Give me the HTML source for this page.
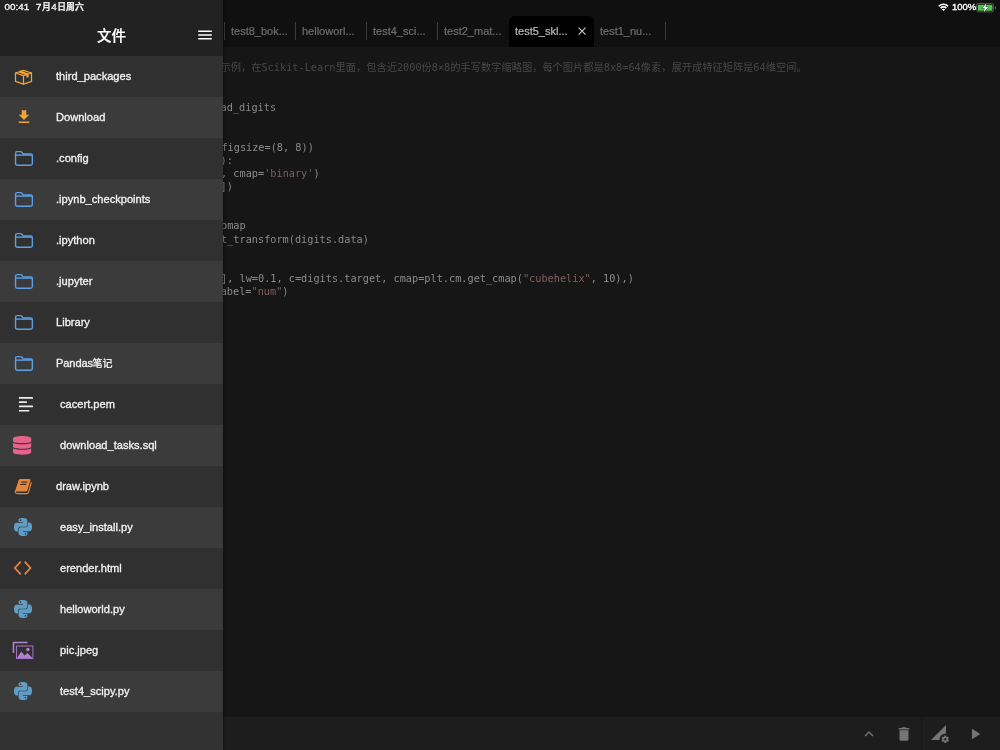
<!DOCTYPE html>
<html lang="zh">
<head>
<meta charset="utf-8">
<title>文件</title>
<style>
*{box-sizing:border-box;margin:0;padding:0}
html,body{width:1000px;height:750px;overflow:hidden;background:#161616}
body{position:relative;will-change:transform;font-family:"Liberation Sans","Noto Sans CJK SC",sans-serif;color:#e6e6e6}
#main{position:absolute;left:0;top:0;width:1000px;height:750px;background:#161616}
#tabbar{position:absolute;left:0;top:0;width:1000px;height:47px;background:#101010}
.tab{position:absolute;top:16px;height:31px;line-height:30px;font-size:11px;color:#6e6e6e;white-space:nowrap;-webkit-text-stroke:.2px #6e6e6e}
.tab.active{background:#000;border-radius:6px 6px 0 0;color:#bcbcbc;-webkit-text-stroke:.2px #bcbcbc}
.sep{position:absolute;top:22px;width:1px;height:18px;background:#3c3c3c}
#code{position:absolute;left:0;top:0;font-family:"DejaVu Sans Mono","Liberation Mono","Noto Sans CJK SC",monospace;font-size:10.24px;color:#8b8b8b}
.ln{position:absolute;white-space:pre;height:13px;line-height:13px}
.str{color:#7d5f5c}
.cm{color:#474747}
#bottombar{position:absolute;left:0;top:717px;width:1000px;height:33px;background:#1d1d1d}
#date i{font-style:normal;padding:0 .3px;font-size:9.8px}
.cj{letter-spacing:0}
.cj i{font-style:normal;letter-spacing:0}
#bsep{position:absolute;left:921px;top:0;width:1px;height:33px;background:#171717}
.bi{position:absolute;top:8px;width:18px;height:18px;fill:#757575}
#status-right{position:absolute;left:0;top:0;width:1000px;height:16px}
#pct{position:absolute;left:952px;top:.2px;font-size:9.5px;line-height:13px;font-weight:normal;-webkit-text-stroke:.35px #fff;color:#fff;white-space:nowrap}
#sidebar{position:absolute;left:0;top:0;width:223px;height:750px;background:#323232;box-shadow:1px 0 3px rgba(0,0,0,.35)}
#sb-head{position:absolute;left:0;top:0;width:223px;height:56px;background:#222}
#time{position:absolute;left:4.6px;top:.4px;font-size:9.9px;line-height:13px;color:#f2f2f2;font-weight:500;-webkit-text-stroke:.35px #f2f2f2;white-space:nowrap}
#date{position:absolute;left:35.8px;top:.4px;font-size:8.8px;letter-spacing:.15px;line-height:13px;color:#f2f2f2;font-weight:500;-webkit-text-stroke:.35px #f2f2f2;white-space:nowrap}
#title{position:absolute;left:0;top:24.6px;width:223px;text-align:center;font-size:14.5px;line-height:22px;font-weight:500;color:#fff;-webkit-text-stroke:.2px #fff}
.row{position:absolute;left:0;width:223px;height:41px;background:#303030}
.row.alt{background:#3b3b3b}
.row span{position:absolute;left:56px;top:.4px;line-height:41px;font-size:11.1px;color:#f2f2f2;white-space:nowrap;-webkit-text-stroke:.32px #f2f2f2;font-weight:500}
.row.f span{left:60px}
.row span b{font-size:10px;font-weight:500;margin-left:-.3px;-webkit-text-stroke:.15px #f2f2f2}
.row span u{text-decoration:none;letter-spacing:-.12px}
.row svg{position:absolute}
</style>
</head>
<body>
<div id="main">
  <div id="tabbar">
    <div class="sep" style="left:224px"></div>
    <div class="tab" style="left:231px">test8_bok...</div>
    <div class="sep" style="left:295px"></div>
    <div class="tab" style="left:302px">helloworl...</div>
    <div class="sep" style="left:366px"></div>
    <div class="tab" style="left:373px">test4_sci...</div>
    <div class="sep" style="left:437px"></div>
    <div class="tab" style="left:444px">test2_mat...</div>
    <div class="tab active" style="left:509px;width:85px;padding-left:6px">test5_skl...<svg style="position:absolute;left:69.2px;top:11px" width="8.200" height="8.200" viewBox="0 0 9 9" fill="none" stroke="#cdcdcd" stroke-width="1.250"><path d="M.7.7L8.300 8.300M8.300.7L.7 8.300"/></svg></div>
    <div class="tab" style="left:600px">test1_nu...</div>
    <div class="sep" style="left:665px"></div>
  </div>
  <div id="code">
    <div class="ln" style="left:220.6px;top:61.40px"><span class="cm cj">示例，在<i>Scikit-Learn</i>里面，包含近<i>2000</i>份<i>8×8</i>的手写数字缩略图，每个图片都是<i>8x8=64</i>像素，展开成特征矩阵是<i>64</i>维空间。</span></div>
    <div class="ln" style="left:220.6px;top:101.40px">ad_digits</div>
    <div class="ln" style="left:221.4px;top:140.76px">figsize=(8, 8))</div>
    <div class="ln" style="left:220.6px;top:153.88px">):</div>
    <div class="ln" style="left:221.0px;top:167.00px">, cmap=<span class="str">'binary'</span>)</div>
    <div class="ln" style="left:220.6px;top:180.12px">])</div>
    <div class="ln" style="left:221.0px;top:219.48px">omap</div>
    <div class="ln" style="left:221.0px;top:232.60px">t_transform(digits.data)</div>
    <div class="ln" style="left:221.0px;top:271.96px">], lw=0.1, c=digits.target, cmap=plt.cm.get_cmap(<span class="str">"cubehelix"</span>, 10),)</div>
    <div class="ln" style="left:220.7px;top:285.08px">abel=<span class="str">"num"</span>)</div>
  </div>
  <div id="bottombar">
    <div id="bsep"></div>
    <svg class="bi" style="left:860px" viewBox="0 0 24 24"><path d="M12 8l-6 6 1.41 1.41L12 10.83l4.59 4.58L18 14z"/></svg>
    <svg class="bi" style="left:895px" viewBox="0 0 24 24"><path d="M6 19c0 1.1.9 2 2 2h8c1.1 0 2-.9 2-2V7H6v12zM19 4h-3.5l-1-1h-5l-1 1H5v2h14V4z"/></svg>
    <svg class="bi" style="left:931px" viewBox="0 0 24 24"><path d="M18.99 11.5c.34 0 .67.03 1 .07L20 0 0 20h11.56c-.04-.33-.07-.66-.07-1 0-4.14 3.36-7.5 7.5-7.5zm3.71 7.99c.02-.16.04-.32.04-.49 0-.17-.01-.33-.04-.49l1.06-.83c.09-.08.12-.21.06-.32l-1-1.73c-.06-.11-.19-.15-.31-.11l-1.24.5c-.26-.2-.54-.37-.85-.49l-.19-1.32c-.01-.12-.12-.21-.24-.21h-2c-.12 0-.23.09-.25.21l-.19 1.32c-.3.13-.59.29-.85.49l-1.24-.5c-.11-.04-.24 0-.31.11l-1 1.73c-.06.11-.04.24.06.32l1.06.83c-.02.16-.03.32-.03.49 0 .17.01.33.03.49l-1.06.83c-.09.08-.12.21-.06.32l1 1.73c.06.11.19.15.31.11l1.24-.5c.26.2.54.37.85.49l.19 1.32c.02.12.12.21.25.21h2c.12 0 .23-.09.25-.21l.19-1.32c.3-.13.59-.29.84-.49l1.25.5c.11.04.24 0 .31-.11l1-1.73c.06-.11.03-.24-.06-.32l-1.07-.83zm-3.71 1.01c-.83 0-1.5-.67-1.5-1.5s.67-1.5 1.5-1.5 1.5.67 1.5 1.5-.67 1.5-1.5 1.5z"/></svg>
    <svg class="bi" style="left:966px" viewBox="0 0 24 24"><path d="M8 5v14l11-7z"/></svg>
  </div>
</div>
<div id="sidebar">
  <div id="sb-head">
    <div id="time">00:41</div>
    <div id="date"><i>7</i>月<i>4</i>日周六</div>
    <div id="title">文件</div>
    <svg id="ham" style="position:absolute;left:196px;top:26.3px" width="18" height="18" viewBox="0 0 24 24" fill="#fff"><path d="M3 18h18v-2H3v2zm0-5h18v-2H3v2zm0-7v2h18V6H3z"/></svg>
  </div>
  <div class="row" style="top:56px"><svg style="left:13px;top:12px" width="21" height="18" viewBox="0 0 21 18" fill="none" stroke="#f2a336" stroke-width="1.25" stroke-linejoin="round" stroke-linecap="round"><path d="M10.500 2.300L18.500 5V13.400L10.500 16.100L2.500 13.400V5Z"/><path d="M2.500 5L10.500 7.700L18.500 5M10.500 7.700V16.100"/><path d="M6.500 3.650L14.500 6.350V9.600" stroke-width="2.300" stroke-linecap="butt"/></svg><span>third_packages</span></div>
  <div class="row alt" style="top:97px"><svg style="left:14.5px;top:11.2px" width="18" height="18" viewBox="0 0 24 24" fill="#f2a336"><path d="M19 9h-4V3H9v6H5l7 7 7-7zM5 18v2h14v-2H5z"/></svg><span>Download</span></div>
  <div class="row" style="top:138px"><svg style="left:14px;top:12px" width="20" height="17" viewBox="0 0 20 17" fill="none" stroke="#5c9fe3" stroke-width="1.400" stroke-linejoin="round"><path d="M1.550 13.500V3.300Q1.550 1.600 3.300 1.600H6.500Q7.500 1.600 8.050 2.450L8.500 3.150Q9.050 4 10.100 4H16.600Q18.350 4 18.350 5.700V13.500Q18.350 15.250 16.600 15.250H3.300Q1.550 15.250 1.550 13.500Z"/><path d="M1.550 5.100H18.350"/></svg><span>.config</span></div>
  <div class="row alt" style="top:179px"><svg style="left:14px;top:12px" width="20" height="17" viewBox="0 0 20 17" fill="none" stroke="#5c9fe3" stroke-width="1.400" stroke-linejoin="round"><path d="M1.550 13.500V3.300Q1.550 1.600 3.300 1.600H6.500Q7.500 1.600 8.050 2.450L8.500 3.150Q9.050 4 10.100 4H16.600Q18.350 4 18.350 5.700V13.500Q18.350 15.250 16.600 15.250H3.300Q1.550 15.250 1.550 13.500Z"/><path d="M1.550 5.100H18.350"/></svg><span>.ipynb_checkpoints</span></div>
  <div class="row" style="top:220px"><svg style="left:14px;top:12px" width="20" height="17" viewBox="0 0 20 17" fill="none" stroke="#5c9fe3" stroke-width="1.400" stroke-linejoin="round"><path d="M1.550 13.500V3.300Q1.550 1.600 3.300 1.600H6.500Q7.500 1.600 8.050 2.450L8.500 3.150Q9.050 4 10.100 4H16.600Q18.350 4 18.350 5.700V13.500Q18.350 15.250 16.600 15.250H3.300Q1.550 15.250 1.550 13.500Z"/><path d="M1.550 5.100H18.350"/></svg><span>.ipython</span></div>
  <div class="row alt" style="top:261px"><svg style="left:14px;top:12px" width="20" height="17" viewBox="0 0 20 17" fill="none" stroke="#5c9fe3" stroke-width="1.400" stroke-linejoin="round"><path d="M1.550 13.500V3.300Q1.550 1.600 3.300 1.600H6.500Q7.500 1.600 8.050 2.450L8.500 3.150Q9.050 4 10.100 4H16.600Q18.350 4 18.350 5.700V13.500Q18.350 15.250 16.600 15.250H3.300Q1.550 15.250 1.550 13.500Z"/><path d="M1.550 5.100H18.350"/></svg><span>.jupyter</span></div>
  <div class="row" style="top:302px"><svg style="left:14px;top:12px" width="20" height="17" viewBox="0 0 20 17" fill="none" stroke="#5c9fe3" stroke-width="1.400" stroke-linejoin="round"><path d="M1.550 13.500V3.300Q1.550 1.600 3.300 1.600H6.500Q7.500 1.600 8.050 2.450L8.500 3.150Q9.050 4 10.100 4H16.600Q18.350 4 18.350 5.700V13.500Q18.350 15.250 16.600 15.250H3.300Q1.550 15.250 1.550 13.500Z"/><path d="M1.550 5.100H18.350"/></svg><span>Library</span></div>
  <div class="row alt" style="top:343px"><svg style="left:14px;top:12px" width="20" height="17" viewBox="0 0 20 17" fill="none" stroke="#5c9fe3" stroke-width="1.400" stroke-linejoin="round"><path d="M1.550 13.500V3.300Q1.550 1.600 3.300 1.600H6.500Q7.500 1.600 8.050 2.450L8.500 3.150Q9.050 4 10.100 4H16.600Q18.350 4 18.350 5.700V13.500Q18.350 15.250 16.600 15.250H3.300Q1.550 15.250 1.550 13.500Z"/><path d="M1.550 5.100H18.350"/></svg><span><u>Pandas</u><b>笔记</b></span></div>
  <div class="row f" style="top:384px"><svg style="left:18px;top:12px" width="16" height="18" viewBox="0 0 16 18" fill="#ebebeb"><rect x="0.9" y="1.1" width="14.1" height="1.6" rx=".3"/><rect x="0.9" y="5.35" width="8" height="1.6" rx=".3"/><rect x="0.9" y="9.6" width="14.1" height="1.6" rx=".3"/><rect x="0.9" y="13.9" width="10.4" height="1.6" rx=".3"/></svg><span>cacert.pem</span></div>
  <div class="row alt f" style="top:425px"><svg style="left:13.1px;top:10.7px" width="19" height="20" viewBox="0 0 19 20" fill="#e8628d"><path d="M0 2.400C0 1 4 0 9.100 0S18.200 1 18.200 2.400V5.200C18.200 6.400 14 7.100 9.100 7.100S0 6.400 0 5.200Z"/><path d="M0 6.900C1.500 7.800 5 8.300 9.100 8.300S16.700 7.800 18.200 6.900V10.700C18.200 11.900 14 12.700 9.100 12.700S0 11.900 0 10.700Z"/><path d="M0 12.400C1.500 13.300 5 13.800 9.100 13.800S16.700 13.300 18.200 12.400V16.300C18.200 17.700 14 18.700 9.100 18.700S0 17.700 0 16.300Z"/></svg><span>download_tasks.sql</span></div>
  <div class="row" style="top:466px"><svg style="left:13px;top:11px" width="21" height="19" viewBox="0 0 21 19"><path d="M7.600 2H16.400Q17.700 2 17.350 3.200L14.300 13.400Q13.950 14.400 12.800 14.400H3.400Q2 14.400 2.400 13.100L5.700 3.200Q6.100 2 7.600 2Z" fill="#e8853d"/><path d="M8.100 5.100H14.200M7.200 7.400H13.300" stroke="#2c2118" stroke-width="1" fill="none"/><path d="M2.400 13.900Q1.900 16.700 4.600 16.700H13.600Q15.100 16.700 15.600 15.100L18.200 5.600" stroke="#e8853d" stroke-width="1.2" fill="none" stroke-linecap="round"/></svg><span>draw.ipynb</span></div>
  <div class="row alt f" style="top:507px"><svg style="left:13.7px;top:11.3px" width="18" height="18" viewBox="0 0 24 24" fill="#5e9ec6"><path d="M14.250.180l.900.200.730.260.590.300.450.320.340.340.250.340.160.330.100.300.040.260.020.200-.010.130V8.500l-.050.630-.130.550-.210.460-.260.380-.300.310-.330.250-.350.190-.350.140-.330.100-.300.070-.260.040-.210.020H8.770l-.690.050-.590.140-.500.220-.410.270-.330.320-.270.350-.200.360-.150.370-.100.350-.070.320-.040.270-.020.210v3.060H3.170l-.210-.030-.280-.070-.320-.120-.350-.180-.360-.260-.360-.360-.350-.460-.320-.590-.280-.730-.210-.880-.140-1.050-.050-1.230.060-1.220.160-1.040.240-.870.320-.710.360-.570.400-.440.420-.330.420-.240.400-.160.360-.100.320-.050.240-.010h.160l.060.010h8.160v-.830H6.180l-.010-2.750-.020-.370.050-.340.110-.310.170-.280.250-.260.310-.230.380-.200.440-.180.510-.150.580-.120.640-.100.710-.060.770-.040.840-.020 1.270.050zm-6.300 1.980l-.230.330-.080.410.080.410.230.340.330.220.410.090.410-.090.330-.220.230-.340.080-.410-.080-.410-.230-.330-.330-.220-.410-.090-.410.090zm13.090 3.950l.280.060.320.120.350.180.360.270.360.350.350.470.320.590.280.730.210.880.140 1.040.050 1.230-.060 1.230-.160 1.040-.240.860-.320.710-.360.570-.400.450-.420.330-.420.240-.400.160-.360.090-.320.050-.240.020-.160-.010h-8.220v.820h5.840l.010 2.760.020.360-.050.340-.110.310-.170.290-.250.250-.310.240-.380.200-.440.170-.510.150-.580.130-.640.090-.710.070-.770.040-.840.010-1.270-.040-1.070-.140-.900-.200-.730-.250-.590-.300-.450-.330-.340-.340-.250-.340-.160-.330-.100-.300-.040-.250-.020-.200.010-.130v-5.340l.050-.640.130-.540.210-.460.260-.380.300-.320.330-.240.350-.200.350-.140.330-.100.300-.060.260-.040.210-.020.130-.010h5.840l.690-.050.590-.140.500-.210.410-.280.330-.320.270-.350.200-.360.150-.360.100-.350.070-.320.040-.280.020-.210V6.070h2.090l.140.010zm-6.470 14.250l-.230.330-.080.410.080.410.230.330.330.230.410.080.410-.080.330-.230.230-.330.080-.410-.080-.410-.230-.330-.330-.230-.410-.080-.410.080z"/></svg><span>easy_install.py</span></div>
  <div class="row f" style="top:548px"><svg style="left:13px;top:12px" width="20" height="17" viewBox="0 0 20 17" fill="none" stroke="#e8853d" stroke-width="1.750"><path d="M7.700 1.700L1.950 8L7.700 14.300M11.700 1.700L17.450 8L11.700 14.300"/></svg><span>erender.html</span></div>
  <div class="row alt f" style="top:589px"><svg style="left:13.7px;top:11.3px" width="18" height="18" viewBox="0 0 24 24" fill="#5e9ec6"><path d="M14.250.180l.900.200.730.260.590.300.450.320.340.340.250.340.160.330.100.300.040.260.020.200-.010.130V8.500l-.050.630-.130.550-.210.460-.260.380-.300.310-.330.250-.350.190-.350.140-.330.100-.300.070-.260.040-.210.020H8.770l-.690.050-.590.140-.500.220-.410.270-.330.320-.270.350-.200.360-.150.370-.100.350-.070.320-.040.270-.020.210v3.060H3.170l-.210-.030-.280-.070-.320-.120-.350-.180-.360-.260-.360-.360-.350-.460-.320-.590-.280-.730-.210-.880-.140-1.050-.050-1.230.060-1.220.160-1.040.240-.870.320-.710.360-.570.400-.440.420-.330.420-.240.400-.160.360-.100.320-.050.240-.010h.160l.060.010h8.160v-.830H6.180l-.010-2.750-.020-.370.050-.340.110-.310.170-.280.250-.260.310-.230.380-.200.440-.180.510-.150.580-.120.640-.100.710-.060.770-.040.840-.020 1.270.050zm-6.300 1.980l-.230.330-.080.410.080.410.230.340.330.220.410.090.410-.090.330-.220.230-.340.080-.410-.080-.410-.230-.330-.330-.220-.410-.090-.410.090zm13.090 3.950l.280.060.320.120.350.180.360.270.360.350.350.470.320.590.280.730.210.880.140 1.040.050 1.230-.060 1.230-.160 1.040-.240.860-.320.710-.360.570-.400.450-.420.330-.420.240-.400.160-.360.090-.320.050-.240.020-.160-.010h-8.220v.820h5.840l.010 2.760.020.360-.050.340-.110.310-.170.290-.250.250-.310.240-.380.200-.440.170-.510.150-.580.130-.640.090-.710.070-.770.040-.840.010-1.270-.040-1.070-.140-.900-.200-.730-.250-.590-.300-.450-.330-.340-.340-.250-.340-.160-.330-.100-.300-.040-.250-.020-.200.010-.130v-5.340l.050-.640.130-.540.210-.460.260-.380.300-.320.330-.240.350-.200.350-.140.330-.100.300-.060.260-.040.210-.020.130-.010h5.840l.690-.050.590-.140.500-.210.410-.280.330-.320.270-.350.200-.360.150-.360.100-.350.070-.320.040-.280.020-.210V6.070h2.090l.140.010zm-6.470 14.250l-.230.330-.080.410.080.410.230.330.330.230.410.080.410-.080.330-.230.230-.330.080-.410-.080-.410-.230-.330-.330-.230-.410-.080-.410.080z"/></svg><span>helloworld.py</span></div>
  <div class="row f" style="top:630px"><svg style="left:12px;top:11px" width="22" height="19" viewBox="0 0 22 19"><path d="M1.500 12V1.500H15.500" fill="none" stroke="#b07fd2" stroke-width="1.6"/><rect x="4.600" y="5" width="16.300" height="12.500" fill="none" stroke="#b07fd2" stroke-width=".9"/><path d="M5 17.100L9.300 10.400L12.600 14.600L15.400 12.100L20.500 17.100Z" fill="#b07fd2"/><circle cx="15.900" cy="8.500" r="1.700" fill="#b07fd2"/></svg><span>pic.jpeg</span></div>
  <div class="row alt f" style="top:671px"><svg style="left:13.7px;top:11.3px" width="18" height="18" viewBox="0 0 24 24" fill="#5e9ec6"><path d="M14.250.180l.900.200.730.260.590.300.450.320.340.340.250.340.160.330.100.300.040.260.020.200-.010.130V8.500l-.050.630-.130.550-.210.460-.260.380-.300.310-.330.250-.350.190-.350.140-.330.100-.300.070-.260.040-.210.020H8.770l-.690.050-.590.140-.500.220-.410.270-.330.320-.270.350-.200.360-.150.370-.100.350-.070.320-.040.270-.020.210v3.060H3.170l-.210-.030-.280-.070-.320-.120-.350-.180-.360-.260-.360-.360-.350-.460-.320-.590-.280-.730-.210-.880-.140-1.050-.050-1.230.060-1.220.160-1.040.240-.870.320-.710.360-.570.400-.440.420-.330.420-.240.400-.160.360-.100.320-.050.240-.010h.160l.060.010h8.160v-.830H6.180l-.010-2.750-.020-.370.050-.340.110-.310.170-.280.250-.260.310-.230.380-.200.440-.180.510-.150.580-.120.640-.100.710-.060.770-.040.840-.020 1.270.050zm-6.300 1.980l-.230.330-.080.410.080.410.230.340.330.220.410.090.410-.090.330-.220.230-.340.080-.410-.080-.410-.230-.330-.330-.220-.410-.090-.410.090zm13.090 3.950l.280.060.320.120.350.180.360.270.360.350.350.470.320.590.280.730.210.880.140 1.040.050 1.230-.060 1.230-.160 1.040-.240.860-.320.710-.360.570-.400.450-.420.330-.420.240-.400.160-.360.090-.320.050-.240.020-.160-.010h-8.220v.820h5.840l.010 2.760.020.360-.050.340-.110.310-.170.290-.250.250-.310.240-.380.200-.440.170-.510.150-.580.130-.640.090-.710.070-.770.040-.840.010-1.270-.040-1.070-.140-.900-.200-.730-.250-.590-.300-.450-.330-.340-.340-.250-.340-.160-.330-.100-.300-.040-.250-.020-.200.010-.130v-5.340l.050-.640.130-.540.210-.460.260-.380.300-.320.330-.240.350-.200.350-.140.330-.100.300-.060.260-.040.210-.020.130-.010h5.840l.690-.050.590-.140.500-.210.410-.280.330-.320.270-.350.200-.360.150-.360.100-.350.070-.320.040-.280.020-.210V6.070h2.090l.140.010zm-6.470 14.250l-.230.330-.080.410.080.410.230.330.330.230.410.080.410-.080.330-.230.230-.330.080-.410-.080-.410-.230-.330-.330-.230-.410-.080-.410.080z"/></svg><span>test4_scipy.py</span></div>
</div>
<div id="status-right">
  <svg style="position:absolute;left:938.3px;top:3.2px" width="11" height="9" viewBox="0 0 11 9" fill="none" stroke="#fff" stroke-width="1.550" stroke-linecap="butt"><path d="M.8 3.200A6.700 6.700 0 0 1 10.200 3.200"/><path d="M2.600 5.100A4.100 4.100 0 0 1 8.400 5.100"/><path d="M5.500 8.100L3.900 6.400A2.300 2.300 0 0 1 7.100 6.400Z" fill="#fff" stroke="none"/></svg>
  <div id="pct">100%</div>
  <svg style="position:absolute;left:975.6px;top:3px" width="22" height="10" viewBox="0 0 22 10"><rect x=".5" y=".5" width="17.200" height="8.400" rx="2.300" fill="none" stroke="#555" stroke-width="1"/><path d="M18.900 3.200Q20.100 3.600 20.100 4.700T18.900 6.200Z" fill="#666"/><rect x="1.700" y="1.700" width="14.800" height="6" rx="1.200" fill="#50c250"/><path d="M10.400 .2L6.100 5.300H8.700L7.800 9.200L12.200 4.100H9.500Z" fill="#fff" stroke="#1b1b1b" stroke-width=".8" paint-order="stroke"/></svg>
</div>
</body>
</html>
